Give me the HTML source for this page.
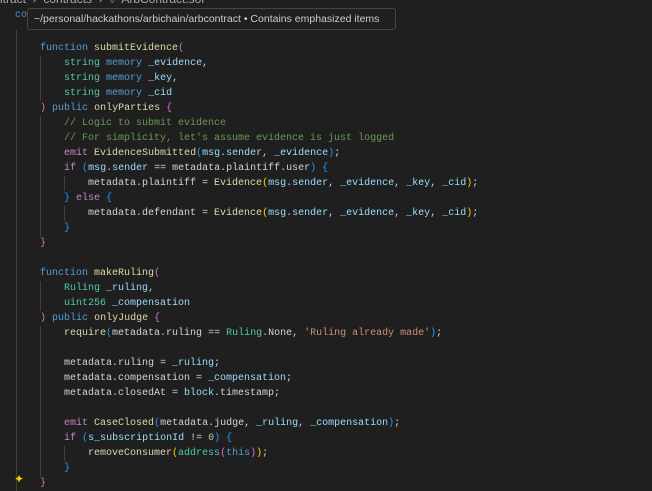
<!DOCTYPE html>
<html><head><style>
html,body{margin:0;padding:0;background:#1f1f1f;width:652px;height:488px;overflow:hidden;}
.ed{position:absolute;left:0;top:0;width:652px;height:488px;font-family:"Liberation Mono",monospace;font-size:10px;color:#d4d4d4;}
.code{position:absolute;left:0;top:3px;width:652px;height:488px;}
.l{position:absolute;left:16px;height:15px;line-height:15px;white-space:pre;}
.k{color:#569cd6}.f{color:#dcdcaa}.t{color:#4ec9b0}.p{color:#9cdcfe}.c{color:#6a9955}.m{color:#c586c0}.s{color:#ce9178}.n{color:#b5cea8}
.b1{color:#ffd700}.b2{color:#da70d6}.b3{color:#179fff}
.g{position:absolute;width:1px;background:#404040;}
.tip{position:absolute;left:27px;top:8px;width:369px;height:22px;background:#202020;border:1px solid #454545;border-radius:3px;font-family:"Liberation Sans",sans-serif;font-size:10.5px;color:#cccccc;line-height:20px;padding-left:6px;box-sizing:border-box;white-space:nowrap;overflow:hidden;}
.bc{position:absolute;left:-4px;top:-8px;font-family:"Liberation Sans",sans-serif;font-size:12px;color:#a9a9a9;white-space:pre;}
</style></head><body><div class="ed">
<div class="bc">ntract  ›  contracts  ›  <span style="color:#4b8ec9">◊</span>  ArbContract.sol</div>
<div style="position:absolute;left:15px;top:10px;font-size:10px;color:#4b8ec9">co</div>
<div class="code">
<div class="g" style="left:16px;top:27px;height:461px"></div>
<div class="g" style="left:40px;top:53px;height:45px"></div>
<div class="g" style="left:40px;top:113px;height:120px"></div>
<div class="g" style="left:64px;top:173px;height:15px"></div>
<div class="g" style="left:64px;top:203px;height:15px"></div>
<div class="g" style="left:40px;top:278px;height:30px"></div>
<div class="g" style="left:40px;top:323px;height:150px"></div>
<div class="g" style="left:64px;top:443px;height:15px"></div>
<div class="l" style="top:38px">    <span class="k">function</span> <span class="f">submitEvidence</span><span class="b2">(</span></div>
<div class="l" style="top:53px">        <span class="t">string</span> <span class="k">memory</span> <span class="p">_evidence</span>,</div>
<div class="l" style="top:68px">        <span class="t">string</span> <span class="k">memory</span> <span class="p">_key</span>,</div>
<div class="l" style="top:83px">        <span class="t">string</span> <span class="k">memory</span> <span class="p">_cid</span></div>
<div class="l" style="top:98px">    <span class="b2">)</span> <span class="k">public</span> <span class="f">onlyParties</span> <span class="b2">{</span></div>
<div class="l" style="top:113px">        <span class="c">// Logic to submit evidence</span></div>
<div class="l" style="top:128px">        <span class="c">// For simplicity, let's assume evidence is just logged</span></div>
<div class="l" style="top:143px">        <span class="m">emit</span> <span class="f">EvidenceSubmitted</span><span class="b3">(</span><span class="p">msg</span>.<span class="p">sender</span>, <span class="p">_evidence</span><span class="b3">)</span>;</div>
<div class="l" style="top:158px">        <span class="m">if</span> <span class="b3">(</span><span class="p">msg</span>.<span class="p">sender</span> == metadata.plaintiff.user<span class="b3">)</span> <span class="b3">{</span></div>
<div class="l" style="top:173px">            metadata.plaintiff = <span class="f">Evidence</span><span class="b1">(</span><span class="p">msg</span>.<span class="p">sender</span>, <span class="p">_evidence</span>, <span class="p">_key</span>, <span class="p">_cid</span><span class="b1">)</span>;</div>
<div class="l" style="top:188px">        <span class="b3">}</span> <span class="m">else</span> <span class="b3">{</span></div>
<div class="l" style="top:203px">            metadata.defendant = <span class="f">Evidence</span><span class="b1">(</span><span class="p">msg</span>.<span class="p">sender</span>, <span class="p">_evidence</span>, <span class="p">_key</span>, <span class="p">_cid</span><span class="b1">)</span>;</div>
<div class="l" style="top:218px">        <span class="b3">}</span></div>
<div class="l" style="top:233px">    <span class="b2">}</span></div>
<div class="l" style="top:263px">    <span class="k">function</span> <span class="f">makeRuling</span><span class="b2">(</span></div>
<div class="l" style="top:278px">        <span class="t">Ruling</span> <span class="p">_ruling</span>,</div>
<div class="l" style="top:293px">        <span class="t">uint256</span> <span class="p">_compensation</span></div>
<div class="l" style="top:308px">    <span class="b2">)</span> <span class="k">public</span> <span class="f">onlyJudge</span> <span class="b2">{</span></div>
<div class="l" style="top:323px">        <span class="f">require</span><span class="b3">(</span>metadata.ruling == <span class="t">Ruling</span>.None, <span class="s">'Ruling already made'</span><span class="b3">)</span>;</div>
<div class="l" style="top:353px">        metadata.ruling = <span class="p">_ruling</span>;</div>
<div class="l" style="top:368px">        metadata.compensation = <span class="p">_compensation</span>;</div>
<div class="l" style="top:383px">        metadata.closedAt = <span class="p">block</span>.timestamp;</div>
<div class="l" style="top:413px">        <span class="m">emit</span> <span class="f">CaseClosed</span><span class="b3">(</span>metadata.judge, <span class="p">_ruling</span>, <span class="p">_compensation</span><span class="b3">)</span>;</div>
<div class="l" style="top:428px">        <span class="m">if</span> <span class="b3">(</span><span class="p">s_subscriptionId</span> != <span class="n">0</span><span class="b3">)</span> <span class="b3">{</span></div>
<div class="l" style="top:443px">            <span class="f">removeConsumer</span><span class="b1">(</span><span class="t">address</span><span class="b2">(</span><span class="k">this</span><span class="b2">)</span><span class="b1">)</span>;</div>
<div class="l" style="top:458px">        <span class="b3">}</span></div>
<div class="l" style="top:473px">    <span class="b2">}</span></div>
<div style="position:absolute;left:14px;top:471px;color:#ffcc00;font-size:12px;line-height:12px">✦</div>
</div>
<div class="tip">~/personal/hackathons/arbichain/arbcontract • Contains emphasized items</div>
</div></body></html>
